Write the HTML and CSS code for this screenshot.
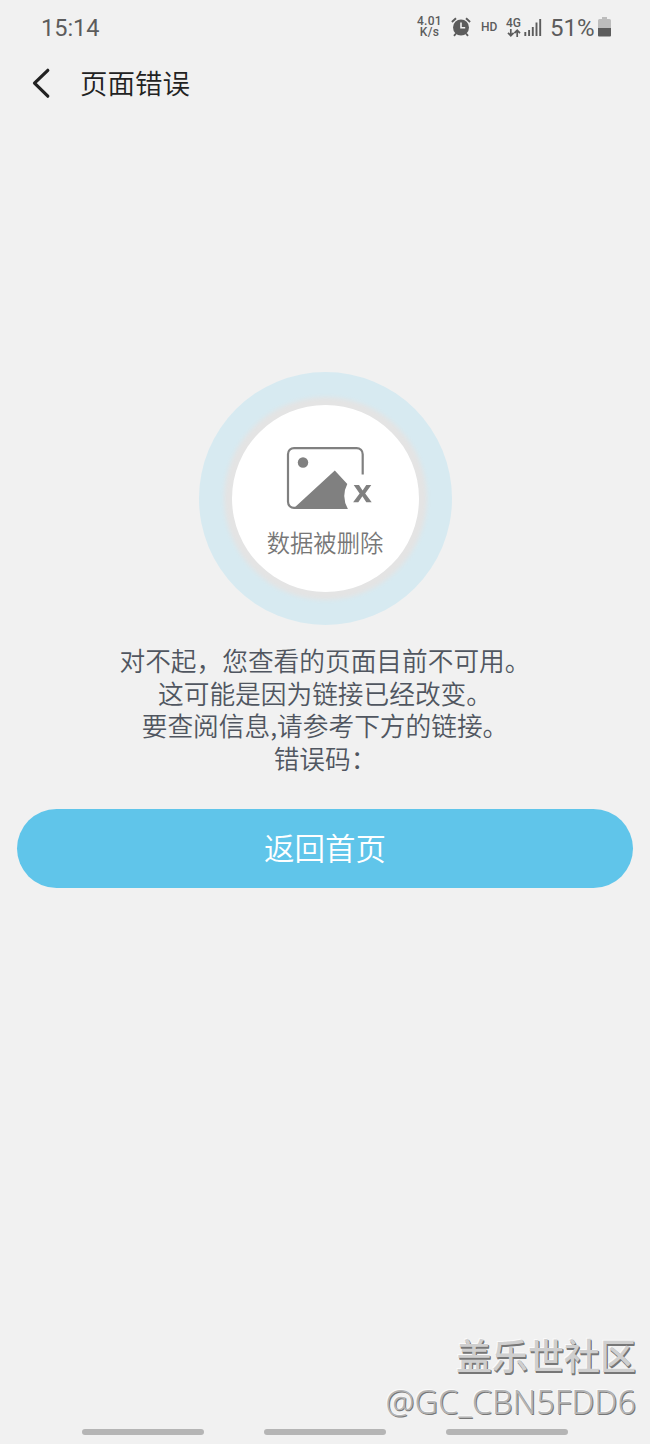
FILE: index.html
```html
<!DOCTYPE html>
<html lang="zh-CN">
<head>
<meta charset="utf-8">
<title>页面错误</title>
<link rel="stylesheet" href="styles.css">
</head>
<body>
<div class="screen">
  <div class="status">
    <span class="time">15:14</span>
    <div class="speed"><span>4.01</span><span>K/s</span></div>
    <svg class="alarm" width="20" height="20" viewBox="0 0 20 20">
      <circle cx="10" cy="10.500" r="8" fill="#5c5c5c"/>
      <path d="M.900 5 5 1.200M19.100 5 15 1.200M5 16.500l-2 2.400M15 16.500l2 2.400" stroke="#5c5c5c" stroke-width="1.900" fill="none"/>
      <path d="M10 5.500v5.300h4.200" stroke="#f1f1f1" stroke-width="1.600" fill="none"/>
    </svg>
    <span class="hd">HD</span>
    <div class="net"><span>4G</span>
      <svg width="14" height="8" viewBox="0 0 14 8"><path d="M3.800 0v6.200M1 3.800l2.800 2.900 2.800-2.900M10.200 8V1.700M7.400 4.200l2.800-2.900L13 4.200" stroke="#5c5c5c" stroke-width="1.700" fill="none"/></svg>
    </div>
    <svg class="signal" width="18" height="18" viewBox="0 0 18 18"><path d="M1.300 18v-4M5.100 18v-6M8.800 18V9M12.500 18V4.500M16.200 18V1" stroke="#5c5c5c" stroke-width="1.900"/></svg>
    <span class="percent">51%</span>
    <svg class="battery" width="13" height="20" viewBox="0 0 13 20"><path d="M4 0h5v2h2.500Q13 2 13 3.500V11H0V3.500Q0 2 1.500 2H4z" fill="#bdbdbd"/><path d="M0 11h13v7.500q0 1-1 1H1q-1 0-1-1z" fill="#5c5c5c"/></svg>
  </div>
  <header class="header">
    <svg width="20" height="32" viewBox="0 0 20 32"><path d="M16.800 3.300 3.500 16.200l13.300 13" fill="none" stroke="#222" stroke-width="3.200" stroke-linecap="round" stroke-linejoin="round"/></svg>
    <h1 class="title">页面错误</h1>
  </header>
  <main class="main">
    <div class="halo"><div class="disc">
      <svg class="picture" width="88" height="65" viewBox="0 0 88 64" preserveAspectRatio="none">
        <path d="M76.700 28V8a6 6 0 0 0-6-6H8a6 6 0 0 0-6 6v47a6 6 0 0 0 6 6h12" fill="none" stroke="#808080" stroke-width="2.200"/>
        <circle cx="17" cy="16.300" r="5.200" fill="#808080"/>
        <path d="M7.500 61.500 48.800 24 61.300 37.300Q54.800 49.500 61.900 62H8z" fill="#808080"/>
        <path d="M67.700 38.400h5.300l3.600 5.500 3.700-5.500h5l-6.100 8.300 6.500 8.700h-5.400l-3.900-5.900-4.100 5.900h-5.200l6.500-8.600z" fill="#808080"/>
      </svg>
      <span class="caption">数据被删除</span>
    </div></div>
    <div class="message"><p>对不起，您查看的页面目前不可用。</p><p>这可能是因为链接已经改变。</p><p>要查阅信息,请参考下方的链接。</p><p>错误码：</p></div>
    <button class="home">返回首页</button>
  </main>
  <nav class="nav"><i class="pill"></i><i class="pill"></i><i class="pill"></i></nav>
  <div class="watermark"><span class="community">盖乐世社区</span><span class="user">@GC_CBN5FDD6</span></div>
</div>
</body>
</html>
```
FILE: styles.css
```css
* { box-sizing: border-box; }
body { margin: 0; background: #f1f1f1; font-family: Roboto, "Noto Sans CJK SC", sans-serif; }
.screen { position: relative; width: 650px; height: 1444px; display: flex; flex-direction: column; overflow: hidden; }
.status { height: 54px; padding: 0 39px 0 41px; display: flex; align-items: center; color: #5c5c5c; }
.time { font-size: 23.500px; margin-right: auto; padding-top: 1px; }
.speed { display: flex; flex-direction: column; align-items: center; font-size: 12px; line-height: 11.500px; font-weight: 500; letter-spacing: .300px; width: 25px; }
.alarm { margin-left: 9px; }
.hd { font-size: 12px; font-weight: 500; margin-left: 10px; width: 16px; }
.net { display: flex; flex-direction: column; align-items: center; margin-left: 9px; width: 15px; font-size: 12px; line-height: 12px; font-weight: 500; }
.signal { margin-left: 3px; }
.percent { font-size: 24px; margin-left: 8px; width: 44px; padding-top: 1px; }
.battery { margin-left: 4px; }
.header { height: 58px; padding-left: 31px; display: flex; align-items: center; gap: 29px; }
.title { margin: -2px 0 0; font: 350 27.500px/40px "Noto Sans CJK SC", sans-serif; color: #222; }
.main { display: flex; flex-direction: column; align-items: center; padding-top: 260px; }
.halo { width: 253px; height: 253px; border-radius: 50%; background: #d7eaf1; display: flex; align-items: center; justify-content: center; }
.disc { width: 187px; height: 187px; border-radius: 50%; background: #fff; box-shadow: 0 0 4px 8px #e4e4e4; display: flex; flex-direction: column; align-items: center; padding-top: 41px; }
.picture { margin-left: 9px; flex: none; }
.caption { margin-top: 14px; font: 350 23.300px/34px "Noto Sans CJK SC", sans-serif; color: #777; }
.message { margin: 19px 0 0; text-align: center; font: 350 25.700px/32.600px "Noto Sans CJK SC", sans-serif; color: #505660; }
.message p { margin: 0; }
.home { margin-top: 35px; width: 616px; height: 79px; padding: 0 0 4px; border: 0; border-radius: 40px; background: #60c5ea; color: #fff; font: 350 30.500px/44px "Noto Sans CJK SC", sans-serif; }
.nav { margin-top: auto; padding: 0 82px 9px; display: flex; justify-content: space-between; }
.pill { width: 122px; height: 6px; border-radius: 3px; background: #b5b5b5; }
.watermark { position: absolute; right: 14px; bottom: 20px; display: flex; flex-direction: column; align-items: flex-end; }
.community { font: 500 36px/50px "Noto Sans CJK SC", sans-serif; color: #cfcfcf; text-shadow: 1px 1px 0 #777, 1px 2px 0 #777, -1px -1px 0 #fafafa; }
.user { font: 350 32.500px/45px "Noto Sans", sans-serif; color: #b4b4b4; text-shadow: 1px 1px 0 #777, -1px -1px 0 #fafafa; }
```
